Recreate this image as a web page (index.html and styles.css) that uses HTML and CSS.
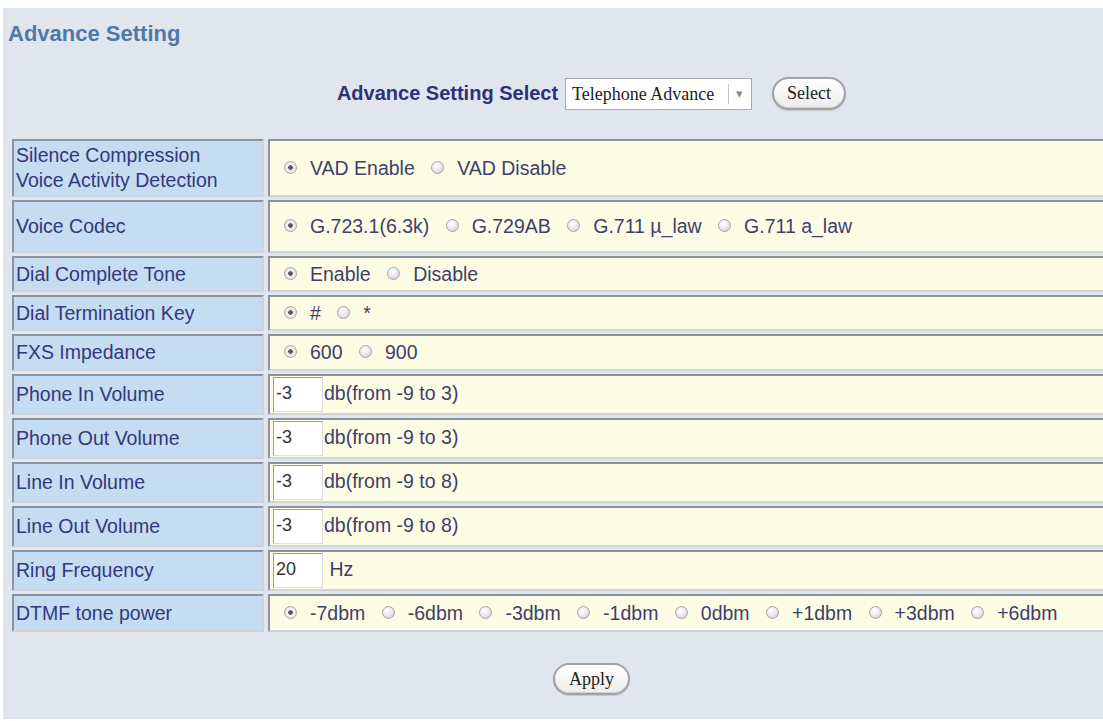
FILE: index.html
```html
<!DOCTYPE html>
<html lang="en">
<head>
    <meta charset="UTF-8">
    <title>Advance Setting</title>
    <link rel="stylesheet" href="styles.css">
</head>
<body>
    <div class="panel">
        <div class="page-title">Advance Setting</div>

        <form class="select-row">
            <span class="select-label">Advance Setting Select</span>
            <span class="select-wrap">
                <select class="adv-select">
                    <option>Telephone Advance</option>
                </select>
            </span>
            <button type="button" class="pill-button select-btn">Select</button>
        </form>

        <table class="settings">
            <tr class="row-2line">
                <td class="label">Silence Compression<br>Voice Activity Detection</td>
                <td class="value choices">
                    <label class="opt"><input type="radio" name="vad" checked>VAD Enable</label>
                    <label class="opt"><input type="radio" name="vad">VAD Disable</label>
                </td>
            </tr>
            <tr class="row-codec">
                <td class="label">Voice Codec</td>
                <td class="value choices">
                    <label class="opt"><input type="radio" name="codec" checked>G.723.1(6.3k)</label>
                    <label class="opt"><input type="radio" name="codec">G.729AB</label>
                    <label class="opt"><input type="radio" name="codec">G.711 µ_law</label>
                    <label class="opt"><input type="radio" name="codec">G.711 a_law</label>
                </td>
            </tr>
            <tr class="row-short">
                <td class="label">Dial Complete Tone</td>
                <td class="value choices">
                    <label class="opt"><input type="radio" name="dct" checked>Enable</label>
                    <label class="opt"><input type="radio" name="dct">Disable</label>
                </td>
            </tr>
            <tr class="row-short">
                <td class="label">Dial Termination Key</td>
                <td class="value choices">
                    <label class="opt"><input type="radio" name="key" checked>#</label>
                    <label class="opt"><input type="radio" name="key">*</label>
                </td>
            </tr>
            <tr class="row-mid">
                <td class="label">FXS Impedance</td>
                <td class="value choices">
                    <label class="opt"><input type="radio" name="fxs" checked>600</label>
                    <label class="opt"><input type="radio" name="fxs">900</label>
                </td>
            </tr>
            <tr class="row-input">
                <td class="label">Phone In Volume</td>
                <td class="value"><input type="text" class="num" value="-3">db(from -9 to 3)</td>
            </tr>
            <tr class="row-input">
                <td class="label">Phone Out Volume</td>
                <td class="value"><input type="text" class="num" value="-3">db(from -9 to 3)</td>
            </tr>
            <tr class="row-input">
                <td class="label">Line In Volume</td>
                <td class="value"><input type="text" class="num" value="-3">db(from -9 to 8)</td>
            </tr>
            <tr class="row-input">
                <td class="label">Line Out Volume</td>
                <td class="value"><input type="text" class="num" value="-3">db(from -9 to 8)</td>
            </tr>
            <tr class="row-input">
                <td class="label">Ring Frequency</td>
                <td class="value"><input type="text" class="num" value="20"> Hz</td>
            </tr>
            <tr class="row-dtmf">
                <td class="label">DTMF tone power</td>
                <td class="value choices">
                    <label class="opt"><input type="radio" name="dtmf" checked>-7dbm</label>
                    <label class="opt"><input type="radio" name="dtmf">-6dbm</label>
                    <label class="opt"><input type="radio" name="dtmf">-3dbm</label>
                    <label class="opt"><input type="radio" name="dtmf">-1dbm</label>
                    <label class="opt"><input type="radio" name="dtmf">0dbm</label>
                    <label class="opt"><input type="radio" name="dtmf">+1dbm</label>
                    <label class="opt"><input type="radio" name="dtmf">+3dbm</label>
                    <label class="opt"><input type="radio" name="dtmf">+6dbm</label>
                </td>
            </tr>
        </table>

        <div class="apply-row">
            <button type="button" class="pill-button apply-btn">Apply</button>
        </div>
    </div>
</body>
</html>
```

FILE: styles.css
```css
body {
    margin: 0;
    padding: 8px 0 0 3px;
    background: #ffffff;
    font-family: "Liberation Sans", Arial, sans-serif;
    overflow: hidden;
}
.panel {
    width: 1177px;
    box-sizing: border-box;
    background: #e1e6ee;
    padding: 13px 5px 24px 5px;
}
.page-title {
    font-size: 22px;
    line-height: 26px;
    font-weight: bold;
    color: #4d79a6;
}

/* advance setting selector */
.select-row {
    display: flex;
    justify-content: center;
    align-items: center;
    margin: 30px 0 0 0;
    height: 33px;
}
.select-label {
    font-size: 20px;
    font-weight: bold;
    color: #2e307c;
    margin-right: 7px;
}
.select-wrap {
    position: relative;
    display: inline-block;
}
.adv-select {
    appearance: none;
    -webkit-appearance: none;
    width: 187px;
    height: 32px;
    border: 1px solid #a9a9a9;
    border-radius: 0;
    background: #ffffff;
    font-family: "Liberation Serif", "Times New Roman", serif;
    font-size: 18px;
    color: #222;
    padding: 0 0 0 6px;
    outline: none;
}
.select-wrap::after {
    content: "\25BE";
    position: absolute;
    top: 6px;
    right: 9px;
    height: 20px;
    padding-left: 7px;
    border-left: 1px solid #c4c4c4;
    font-size: 13px;
    line-height: 20px;
    color: #8a8a8a;
    pointer-events: none;
}
.pill-button {
    font-family: "Liberation Serif", "Times New Roman", serif;
    font-size: 18px;
    color: #1e1e1e;
    background: linear-gradient(#ffffff, #ececec);
    border: 2px solid #a2a2a2;
    border-radius: 17px;
    box-shadow: inset 0 -1px 0 #d0d0d0, 0 1px 1px #c8c8c8;
    padding: 0;
    cursor: pointer;
}
.select-btn {
    width: 74px;
    height: 33px;
    margin-left: 20px;
}

/* settings table */
.settings {
    border-collapse: separate;
    border-spacing: 4px 3px;
    width: 100%;
    margin-top: 26px;
    font-size: 19.5px;
}
.settings td {
    border: 2px solid;
    border-color: #8b939d #cfd4db #cfd4db #8b939d;
    vertical-align: middle;
    line-height: 25px;
}
.settings .label {
    width: 252px;
    box-sizing: border-box;
    background: #c5dcf2;
    color: #34387a;
    padding: 0 0 0 2px;
    white-space: nowrap;
}
.settings .value {
    background: #fdfde6;
    color: #3f3f69;
    padding: 0 0 0 3px;
    white-space: nowrap;
}
.settings .choices {
    padding-left: 14px;
}
.row-2line { height: 58px; }
.row-codec { height: 53px; }
.row-short { height: 36px; }
.row-mid { height: 37px; }
.row-input { height: 41px; }
.row-dtmf { height: 38px; }

.opt {
    margin-right: 11px;
}
.opt input[type="radio"] {
    appearance: none;
    -webkit-appearance: none;
    width: 13px;
    height: 13px;
    margin: 0 13px 0 0;
    border: 1px solid #a4a4a4;
    border-radius: 50%;
    background: radial-gradient(circle at 40% 35%, #ffffff 0, #eeeeee 40%, #c6c6c6 100%);
    vertical-align: 1px;
}
.opt input[type="radio"]:checked {
    background: radial-gradient(circle, #5a5a5a 0, #5a5a5a 2px, #f6f6f6 2.6px, #dadada 100%);
}

.num {
    width: 50px;
    height: 35px;
    box-sizing: border-box;
    border: 1px solid;
    border-color: #9c9c9c #dedede #dedede #9c9c9c;
    background: #ffffff;
    font-family: "Liberation Sans", Arial, sans-serif;
    font-size: 18px;
    line-height: 20px;
    color: #333;
    padding: 0 2px 2px 2px;
    margin: 0 1px 0 0;
    vertical-align: middle;
    outline: none;
}

.apply-row {
    display: flex;
    justify-content: center;
    margin-top: 28px;
}
.apply-btn {
    width: 77px;
    height: 32px;
}
```
